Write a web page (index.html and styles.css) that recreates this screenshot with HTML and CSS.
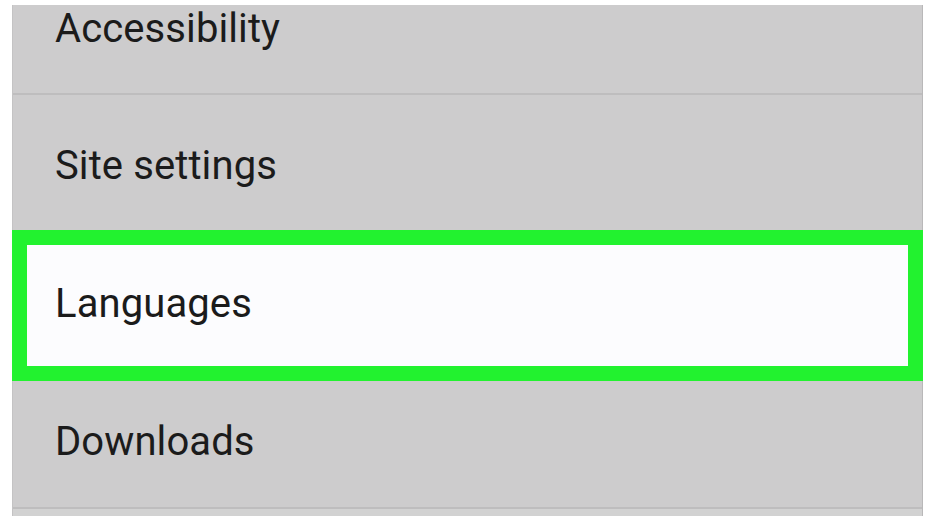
FILE: index.html
```html
<!DOCTYPE html>
<html lang="en">
<head>
<meta charset="utf-8">
<title>Settings</title>
<link rel="stylesheet" href="styles.css">
</head>
<body>
<div class="panel">
  <div class="row row--first"><span class="label">Accessibility</span></div>
  <div class="row"><span class="label">Site settings</span></div>
  <div class="row row--highlight"><span class="label">Languages</span></div>
  <div class="row"><span class="label">Downloads</span></div>
  <div class="row row--rest"></div>
</div>
</body>
</html>
```

FILE: styles.css
```css
html, body {
  margin: 0;
  padding: 0;
  background: #ffffff;
  width: 937px;
  height: 516px;
  overflow: hidden;
}

.panel {
  margin: 5px 14px 0 12px;
  background: #cdcccd;
  border-left: 1px solid #c4c3c4;
  border-right: 1px solid #b9b8b9;
  height: 511px;
  display: flex;
  flex-direction: column;
  font-family: Roboto, "Noto Sans", sans-serif;
  color: #1b1b1b;
}

.row {
  position: relative;
  height: 136px;
  flex: none;
  padding: 47px 0 0 42px;
  box-sizing: content-box;
  height: 89px;
  border-bottom: 2px solid #bebdbe;
}

.row--first {
  padding-top: 0;
  height: 88px;
}

.row--rest {
  border-bottom: none;
  background: #d2d2d2;
  padding: 0;
  height: 10px;
}

.label {
  position: relative;
  z-index: 1;
  display: block;
  font-size: 40px;
  line-height: 48px;
  letter-spacing: 0.1px;
}

.row--highlight::before {
  content: "";
  position: absolute;
  top: -3px;
  left: -1px;
  right: -1px;
  bottom: -12px;
  background: #fcfcfe;
  border: 15px solid #22f22f;
}
```
